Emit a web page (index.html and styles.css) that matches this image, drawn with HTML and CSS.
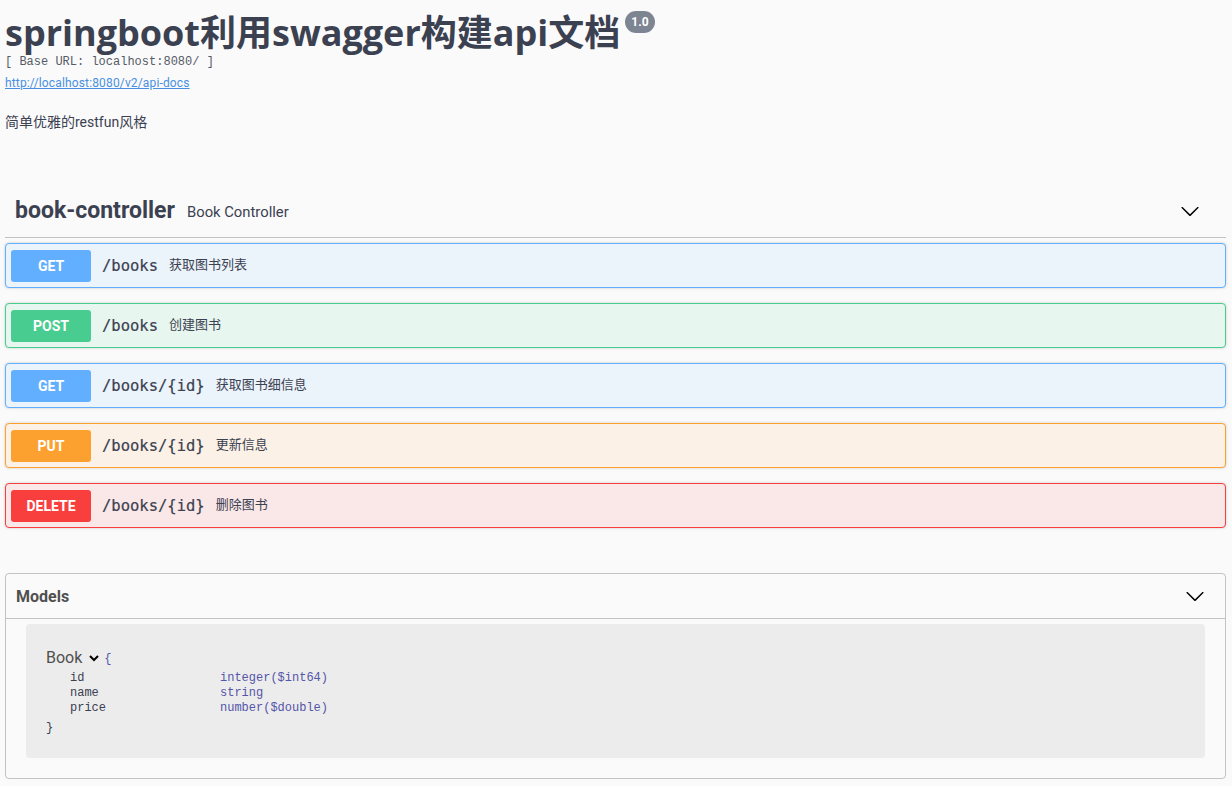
FILE: index.html
```html
<!DOCTYPE html>
<html lang="zh-CN">
<head>
<meta charset="utf-8">
<title>Swagger UI</title>
<link rel="stylesheet" href="styles.css">
</head>
<body>
<div class="wrapper">
  <section class="info">
    <h2 class="title">springboot利用swagger构建api文档<span class="version">1.0</span></h2>
    <div class="base-url">[ Base URL: localhost:8080/ ]</div>
    <a class="docs-link" href="#">http://localhost:8080/v2/api-docs</a>
    <p class="description">简单优雅的restfun风格</p>
  </section>

  <section class="tag-section">
    <div class="tag-header">
      <span class="tag-name">book-controller</span>
      <span class="tag-desc">Book Controller</span>
      <svg class="arrow" viewBox="0 0 20 20" width="20" height="20"><path d="M17.418 6.109c.272-.268.709-.268.979 0s.271.701 0 .969l-7.908 7.830c-.27.268-.707.268-.979 0l-7.908-7.83c-.27-.268-.27-.701 0-.969.271-.268.709-.268.979 0L10 13.25l7.418-7.141z"/></svg>
    </div>

    <div class="opblock get">
      <span class="method">GET</span><span class="path">/books</span><span class="summary">获取图书列表</span>
    </div>
    <div class="opblock post">
      <span class="method">POST</span><span class="path">/books</span><span class="summary">创建图书</span>
    </div>
    <div class="opblock get">
      <span class="method">GET</span><span class="path">/books/{id}</span><span class="summary">获取图书细信息</span>
    </div>
    <div class="opblock put">
      <span class="method">PUT</span><span class="path">/books/{id}</span><span class="summary">更新信息</span>
    </div>
    <div class="opblock delete">
      <span class="method">DELETE</span><span class="path">/books/{id}</span><span class="summary">删除图书</span>
    </div>
  </section>

  <section class="models">
    <h4 class="models-header">
      <span>Models</span>
      <svg class="arrow" viewBox="0 0 20 20" width="20" height="20"><path d="M17.418 6.109c.272-.268.709-.268.979 0s.271.701 0 .969l-7.908 7.83c-.27.268-.707.268-.979 0l-7.908-7.83c-.27-.268-.27-.701 0-.969.271-.268.709-.268.979 0L10 13.25l7.418-7.141z"/></svg>
    </h4>
    <div class="model-container">
      <div class="model-title-row">
        <span class="model-title">Book</span>
        <svg class="model-toggle" viewBox="0 0 12 12" width="12" height="12"><path d="M2 4l4 4 4-4" fill="none" stroke="#000" stroke-width="2"/></svg>
        <span class="brace open">{</span>
      </div>
      <div class="prop"><span class="prop-name">id</span><span class="prop-type">integer($int64)</span></div>
      <div class="prop"><span class="prop-name">name</span><span class="prop-type">string</span></div>
      <div class="prop"><span class="prop-name">price</span><span class="prop-type">number($double)</span></div>
      <div class="brace close">}</div>
    </div>
  </section>
</div>
</body>
</html>
```
FILE: styles.css
```css
html, body {
  margin: 0;
  padding: 0;
  background: #fafafa;
}
body {
  font-family: Roboto, "Noto Sans CJK SC", sans-serif;
  color: #3b4151;
}
.wrapper {
  padding: 0 6px 0 5px;
}
.info {
  padding-top: 10px;
}
.title {
  margin: 0;
  font-family: "Open Sans", "Noto Sans CJK SC", sans-serif;
  font-size: 36px;
  line-height: 46px;
  font-weight: 700;
  color: #3b4151;
}
.version {
  display: inline-block;
  vertical-align: top;
  margin: 1px 0 0 5px;
  padding: 0 6px;
  height: 22px;
  line-height: 22px;
  border-radius: 11px;
  background: #7d8492;
  color: #fff;
  font-family: Roboto, sans-serif;
  font-size: 12px;
  font-weight: 700;
}
.base-url {
  font-family: "Liberation Mono", monospace;
  font-size: 12px;
  line-height: 16px;
  color: #555a66;
  margin-top: -2px;
}
.docs-link {
  display: block;
  font-size: 12px;
  line-height: 16px;
  margin-top: 5px;
  color: #4990e2;
  letter-spacing: 0.15px;
}
.description {
  margin: 21px 0 0;
  font-size: 14px;
  line-height: 20px;
}
.tag-section {
  margin-top: 52px;
}
.tag-header {
  display: flex;
  align-items: center;
  height: 53px;
  padding: 0 26px 0 10px;
  border-bottom: 1px solid rgba(59, 65, 81, 0.3);
  margin-bottom: 5px;
}
.tag-name {
  font-size: 23px;
  font-weight: 700;
}
.tag-desc {
  font-size: 14.8px;
  margin-left: 12px;
  flex: 1;
  padding-top: 2px;
}
.arrow {
  fill: #000;
  flex: none;
}
.opblock {
  display: flex;
  align-items: center;
  box-sizing: border-box;
  height: 45px;
  padding: 0 5px;
  border: 1px solid;
  border-radius: 4px;
  margin-bottom: 15px;
  box-shadow: 0 0 3px rgba(0, 0, 0, 0.19);
}
.method {
  width: 80px;
  height: 32px;
  line-height: 32px;
  text-align: center;
  border-radius: 3px;
  color: #fff;
  font-size: 14px;
  font-weight: 700;
  flex: none;
}
.path {
  font-family: "DejaVu Sans Mono", monospace;
  font-size: 15.5px;
  font-weight: 400;
  padding: 0 11px 0 11px;
  color: #3b4151;
  -webkit-text-stroke: 0.2px #3b4151;
}
.summary {
  font-size: 13px;
  line-height: 16px;
  color: #3b4151;
  padding-bottom: 1px;
}
.get { background: #ebf3fb; border-color: #61affe; }
.get .method { background: #61affe; }
.post { background: #e8f6f0; border-color: #49cc90; }
.post .method { background: #49cc90; }
.put { background: #fbf1e6; border-color: #fca130; }
.put .method { background: #fca130; }
.delete { background: #fae7e7; border-color: #f93e3e; }
.delete .method { background: #f93e3e; }

.models {
  margin-top: 45px;
  border: 1px solid rgba(59, 65, 81, 0.3);
  border-radius: 4px;
  padding-bottom: 20px;
}
.models-header {
  display: flex;
  align-items: center;
  justify-content: space-between;
  margin: 0 0 5px;
  height: 44px;
  padding: 0 20px 0 10px;
  border-bottom: 1px solid rgba(59, 65, 81, 0.3);
  font-size: 16px;
  font-weight: 700;
  color: #505050;
}
.model-container {
  margin: 0 20px;
  background: #ececec;
  border-radius: 4px;
  padding: 22px 20px 22px;
}
.model-title-row {
  display: flex;
  align-items: center;
  height: 22px;
  margin-bottom: 3px;
}
.model-title {
  font-size: 16px;
  color: #505050;
}
.model-toggle {
  margin: 2px 4px 0 6px;
}
.brace {
  font-family: "Liberation Mono", monospace;
  font-size: 12px;
}
.brace.open {
  color: #55a;
  padding-top: 3px;
}
.brace.close {
  margin-top: 5px;
  line-height: 15px;
  color: #3b4151;
}
.prop {
  display: flex;
  font-family: "Liberation Mono", monospace;
  font-size: 12px;
  line-height: 15px;
  padding-left: 24px;
}
.prop-name {
  width: 150px;
  color: #3b4151;
}
.prop-type {
  color: #55a;
}
```
